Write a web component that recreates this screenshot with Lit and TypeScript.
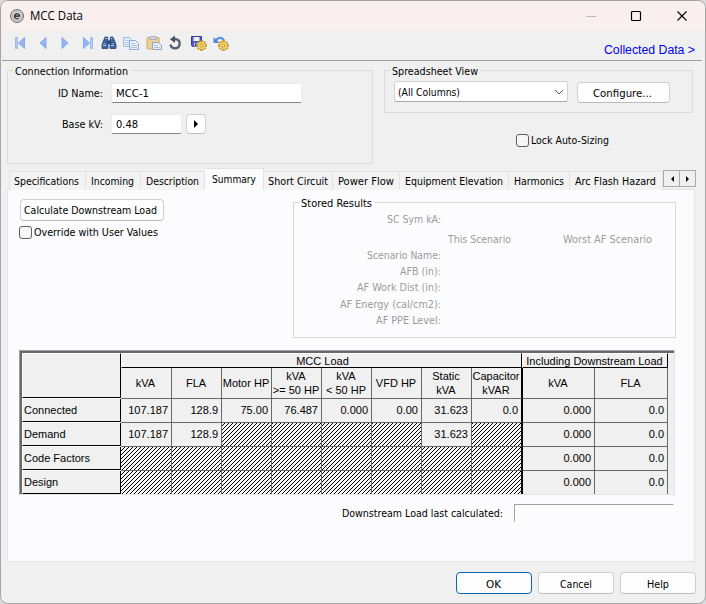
import { LitElement, html, svg, css } from "lit";
import { customElement } from "lit/decorators.js";

const tabs = [
  { label: "Specifications", w: 77, t: 65 }, { label: "Incoming", w: 55, t: 43 },
  { label: "Description", w: 64, t: 53 }, { label: "Summary", w: 59, t: 44, on: true },
  { label: "Short Circuit", w: 69, t: 60 }, { label: "Power Flow", w: 67, t: 56 },
  { label: "Equipment Elevation", w: 109, t: 98 }, { label: "Harmonics", w: 61, t: 50 },
  { label: "Arc Flash Hazard", w: 93, t: 81 },
];

const rows: { name: string; cells: (string | null)[] }[] = [
  { name: "Connected", cells: ["107.187", "128.9", "75.00", "76.487", "0.000", "0.00", "31.623", "0.0", "0.000", "0.0"] },
  { name: "Demand", cells: ["107.187", "128.9", null, null, null, null, "31.623", null, "0.000", "0.0"] },
  { name: "Code Factors", cells: [null, null, null, null, null, null, null, null, "0.000", "0.0"] },
  { name: "Design", cells: [null, null, null, null, null, null, null, null, "0.000", "0.0"] },
];

const heads = [["kVA"], ["FLA"], ["Motor HP"], ["kVA", ">= 50 HP"], ["kVA", "< 50 HP"], ["VFD HP"], ["Static", "kVA"], ["Capacitor", "kVAR"], ["kVA"], ["FLA"]];

const results = [["Scenario Name:", 74], ["AFB (in):", 41], ["AF Work Dist (in):", 84], ["AF Energy (cal/cm2):", 101], ["AF PPE Level:", 65]] as const;

const gear = svg`<g transform="translate(10.5 10.5)"><path d="M-1-5h2v10h-2zM-5-1h10v2h-10z" fill="#e0ae2c" stroke="#a67c16" stroke-width=".6"/><path d="M-1-5h2v10h-2zM-5-1h10v2h-10z" transform="rotate(45)" fill="#e0ae2c" stroke="#a67c16" stroke-width=".6"/><circle r="3.600" fill="#f8d658"/><circle r="1.500" fill="#f0f0f0" stroke="#a67c16" stroke-width=".8"/></g>`;

const icons = [
  { w: 23, g: svg`<path d="M3.500 2.500h2v11h-2z" fill="#b4cdf7" stroke="#8fb0ea" stroke-width=".8"/><path d="M12.500 2.500v11L6.500 8z" fill="#94b6f4" stroke="#7c9fe4" stroke-width=".8"/>` },
  { w: 22, g: svg`<path d="M11 2.500v11L5 8z" fill="#94b6f4" stroke="#7c9fe4" stroke-width=".8"/>` },
  { w: 22, g: svg`<path d="M5 2.500v11L11 8z" fill="#94b6f4" stroke="#7c9fe4" stroke-width=".8"/>` },
  { w: 22, g: svg`<path d="M4.500 2.500v11L10.500 8z" fill="#94b6f4" stroke="#7c9fe4" stroke-width=".8"/><path d="M11.500 2.500h2v11h-2z" fill="#b4cdf7" stroke="#8fb0ea" stroke-width=".8"/>` },
  { w: 22, g: svg`<path d="M4 2h2.500l.5 4v7.500H1V9.500zM12 2H9.500L9 6v7.500h6V9.500z" fill="#3d639c" stroke="#254678" stroke-width=".8"/><path d="M7 5.500h2v3.500H7z" fill="#254678"/><path d="M2 10.500h3M10 10.500h3M4.500 3.500h1.500M10 3.500h1.500" stroke="#c3d7f4"/><path d="M2.500 8.500h2M11 8.500h2" stroke="#88a9d8"/>` },
  { w: 23, g: svg`<path d="M.5 2.500h6l2 2v7h-8z" fill="#e2ebfa" stroke="#9db9e6"/><path d="M2 5.500h4M2 7.500h4M2 9.500h4" stroke="#b5caee"/><path d="M6.500 5.500h6l3 3v6h-9z" fill="#edf3fd" stroke="#8eabde"/><path d="M8 8.500h4M8 10.500h6M8 12.500h6" stroke="#abc3ec"/>` },
  { w: 21, g: svg`<rect x="1" y="2.500" width="12" height="11.500" rx="1" fill="#ecd09c" stroke="#c9a873"/><path d="M4 1.500h6v3H4z" fill="#d8d8dc" stroke="#a4a4ac" stroke-width=".8"/><path d="M6.500 7.500h6l3 3v4h-9z" fill="#e9edf5" stroke="#97a4bd"/><path d="M8 10.500h4M8 12.500h6" stroke="#b4bfd3"/>` },
  { w: 24, g: svg`<path d="M7 4.200H9a4.600 4.600 0 1 1-5.500 5.300" fill="none" stroke="#59626d" stroke-width="2.400"/><path d="M8 .5v7.500L3 4.200z" fill="#48525e"/>` },
  { w: 22, g: svg`<path d="M.5 1.500h10v10h-9l-1-1z" fill="#5459c2" stroke="#373c9b"/><path d="M2.500 2h6v4h-6z" fill="#eef0ff"/><path d="M3 8h5v3.500H3z" fill="#c7caf0"/><path d="M4 8.500h1.500v2.500H4z" fill="#2d328f"/>${gear}` },
  { w: 16, g: svg`<path d="M3 5.500C4.500 2.500 9 1.500 11 5" fill="none" stroke="#5a93e4" stroke-width="2.200"/><path d="M.500 2v6h6z" fill="#4a86dc"/>${gear}` },
];

@customElement("fit-text")
export class FitText extends LitElement {
  static properties = { text: {}, width: { type: Number } };
  declare text: string;
  declare width: number;
  static styles = css`
    :host { display: inline-block; white-space: pre; flex: none; }
    svg { display: block; overflow: visible; height: 14px; }
    text { fill: currentColor; }
  `;
  render() {
    return html`<svg width=${this.width} height="14"><text x="0" y="11" textLength=${this.width} lengthAdjust="spacingAndGlyphs">${this.text}</text></svg>`;
  }
}

const fit = (text: string, width: number) => html`<fit-text .text=${text} .width=${width}></fit-text>`;

@customElement("app-root")
export class AppRoot extends LitElement {
  static styles = css`
    :host { display: block; width: 706px; height: 604px; background: #d9dadc; font: 11px "DejaVu Sans Condensed", "DejaVu Sans", sans-serif; font-stretch: condensed; color: #000; }
    * { box-sizing: border-box; }
    .win { width: 706px; height: 604px; border: 1px solid #a6a6a6; border-radius: 8px; background: #f0f0f0; display: flex; flex-direction: column; overflow: hidden; }
    .title { height: 30px; flex: none; background: #f9efef; display: flex; align-items: center; padding: 0 9px 0 8px; font: 12px "Open Sans", sans-serif; }
    .title fit-text { margin: 0 0 0 5px; }
    .caption { margin-left: auto; width: 110px; height: 14px; }
    .bar { height: 30px; flex: none; border-bottom: 1px solid #9c9c9c; margin-right: 3px; margin-left: 1px; display: flex; padding: 4px 7px 0 10px; }
    .tool svg { display: block; }
    .link { margin: 8px 0 0 auto; color: #0000f0; font: 12.500px "Liberation Sans", sans-serif; }
    .top { height: 108px; flex: none; display: flex; padding: 9px 11px 0 6px; align-items: flex-start; }
    .group { position: relative; border: 1px solid #dcdcdc; }
    .legend { position: absolute; top: -7px; left: 5px; padding: 0 3px 0 2px; background: #f0f0f0; height: 14px; }
    .conn { width: 366px; height: 94px; padding-top: 12px; flex: none; }
    .right { margin-left: 11px; width: 309px; flex: none; }
    .field { display: flex; align-items: center; height: 20px; margin-bottom: 11px; }
    .lab { width: 95px; display: flex; justify-content: flex-end; margin-right: 8px; }
    .input { background: #fff; height: 20px; border: 1px solid #ececec; border-bottom: 1px solid #868686; border-radius: 2px; padding: 2px 4px; }
    .btn { background: #fdfdfd; border: 1px solid #d0d0d0; border-bottom-color: #bcbcbc; border-radius: 4px; display: flex; align-items: center; justify-content: center; height: 22px; flex: none; }
    .mini { width: 20px; height: 20px; margin-left: 4px; }
    .view { height: 43px; display: flex; padding: 10px 0 0 9px; gap: 9px; }
    .select { width: 174px; height: 21px; background: #fff; border: 1px solid #d2d2d2; border-bottom-color: #aaa; border-radius: 2px; display: flex; align-items: center; justify-content: space-between; padding: 0 3px; }
    .cfg { width: 93px; margin-top: 1px; height: 21px; padding-right: 2px; }
    .check { display: flex; align-items: center; gap: 2px; }
    .box { width: 13px; height: 13px; border: 1px solid #5f5f5f; border-radius: 3px; background: #f7f7f7; }
    .lock { margin: 20px 0 0 132px; }
    .tabs { height: 21px; flex: none; display: flex; align-items: flex-end; padding-left: 8px; position: relative; margin-bottom: -1px; }
    .tab { height: 19px; border: 1px solid #e3e3e3; border-left-width: 0; border-bottom: 0; background: #f3f3f3; display: flex; align-items: center; justify-content: center; padding-right: 1px; }
    .tab:first-child { border-left-width: 1px; padding-right: 2px; }
    .tab.on { height: 22px; background: #fbfbfb; padding: 0 1px 2px 0; }
    .spin { width: 17px; height: 17px; border: 1px solid #ababab; background: #f0f0f0; display: flex; align-items: center; justify-content: center; margin-bottom: 3px; }
    .spin + .spin { margin-left: -1px; }
    .panel { width: 688px; height: 373px; flex: none; margin-left: 6px; background: #fcfcfe; border: 1px solid #e3e3e3; padding: 9px 0 0 11px; }
    .upper { display: flex; height: 151px; }
    .left { width: 274px; display: flex; flex-direction: column; }
    .calc { width: 144px; margin: 0 0 4px 1px; padding-right: 3px; }
    .stored { width: 383px; height: 136px; margin-top: 3px; border-color: #d8d8d8; color: #9b9b9b; padding-top: 9px; }
    .stored .legend { background: #fcfcfe; color: #000; }
    .r { width: 147px; height: 16.250px; display: flex; justify-content: flex-end; }
    .scen { display: flex; height: 19.500px; padding: 4px 0 0 154px; gap: 52px; }
    .sheet { width: 656px; height: 145px; border: solid; border-width: 1px; border-color: #a0a0a0 #e3e3e3 #e3e3e3 #a0a0a0; background: #f0f0f0; font: 11px "Liberation Sans", Arial, sans-serif; }
    .inner { border: 2px solid #696969; border-width: 2px 0 0 2px; height: 143px; }
    .grid { display: grid; grid-template-columns: 99px 51px repeat(6, 50px) 51px 72px 73px; grid-template-rows: 15px 31px repeat(4, 24px); height: 141px; overflow: hidden; width: 646px; }
    .rh { border-right: 1px solid #000; border-bottom: 1px solid #000; border-left: 1px solid #fff; margin-bottom: 1px; box-shadow: 0 1px #fff; display: flex; align-items: center; padding: 0 0 0 1px; }
    .corner { grid-row: 1 / 3; border-top: 1px solid #fff; }
    .top1 { border: 1px solid #000; border-top-color: #fff; border-left-color: #fff; display: flex; align-items: center; justify-content: center; }
    .mcc { grid-column: 2 / 10; margin-right: 1px; padding-left: 2px; }
    .inc { grid-column: 10 / 12; margin-left: -1px; padding-right: 1px; }
    .h, .c { border-right: 1px solid #696969; border-bottom: 1px solid #696969; }
    .h { display: flex; flex-direction: column; align-items: center; justify-content: center; line-height: 14px; white-space: nowrap; padding-right: 1px; }
    .c { display: flex; align-items: center; justify-content: flex-end; padding: 0 3px 1px 0; }
    .hatch { background: #f4f4f4 url("data:image/svg+xml,%3Csvg xmlns='http://www.w3.org/2000/svg' width='4' height='4' shape-rendering='crispEdges'%3E%3Cpath d='M3 0h1v1h-1zM2 1h1v1h-1zM1 2h1v1h-1zM0 3h1v1h-1z'/%3E%3C/svg%3E") fixed; }
    .h.edge, .c.edge { border-right: 2px solid #000; }
    .last { display: flex; align-items: center; justify-content: flex-end; gap: 11px; margin: 9px 20px 0 0; }
    .out { width: 160px; height: 18px; border: 1px solid #a0a0a0; border-right-color: #fff; border-bottom-color: #fff; }
    .foot { display: flex; justify-content: flex-end; gap: 6px; padding: 10px 9px 0 0; }
    .foot .btn { width: 76px; padding: 1px 1px 0 0; }
    .foot .ok { border-color: #0067c0; }
  `;

  render() {
    return html`<div class="win">
      <div class="title">
        <svg width="16" height="16"><circle cx="8" cy="8" r="6.500" fill="#dedede" stroke="#686868"/><circle cx="8" cy="8" r="4.900" fill="#d0d0d0" stroke="#9a9a9a" stroke-width=".6"/><path d="M5.500 8.200h5a2.500 2.500 0 1 0-.8 1.900" fill="none" stroke="#222" stroke-width="1.200"/></svg>
        ${fit("MCC Data", 53)}
        <svg class="caption" viewBox="0 0 110 14"><path d="M0 7.500h10" stroke="#b8b8b8"/><rect x="45.500" y="2.500" width="9" height="9" rx="1" fill="none" stroke="#000" stroke-width="1.200"/><path d="M91.500 2.500l9 9M100.500 2.500l-9 9" stroke="#000" stroke-width="1.100"/></svg>
      </div>
      <div class="bar">
        ${icons.map((i) => html`<div class="tool" style="width:${i.w}px"><svg width="16" height="16">${i.g}</svg></div>`)}
        <div class="link">${fit("Collected Data >", 91)}</div>
      </div>
      <div class="top">
        <div class="group conn"><div class="legend">${fit("Connection Information", 113)}</div>
          <div class="field"><div class="lab">${fit("ID Name:", 45)}</div><div class="input" style="width:191px">${fit("MCC-1", 33)}</div></div>
          <div class="field"><div class="lab">${fit("Base kV:", 41)}</div><div class="input" style="width:71px">${fit("0.48", 22)}</div>
            <div class="btn mini"><svg width="6" height="8"><path d="M1 0l4 4-4 4z"/></svg></div></div>
        </div>
        <div class="right">
          <div class="group view"><div class="legend">${fit("Spreadsheet View", 86)}</div>
            <div class="select">${fit("(All Columns)", 62)}<svg width="10" height="6"><path d="M1 1l4 4 4-4" fill="none" stroke="#555"/></svg></div>
            <div class="btn cfg">${fit("Configure...", 59)}</div>
          </div>
          <div class="check lock"><div class="box"></div>${fit("Lock Auto-Sizing", 78)}</div>
        </div>
      </div>
      <div class="tabs">
        ${tabs.map((t) => html`<div class="tab ${t.on ? "on" : ""}" style="width:${t.w}px">${fit(t.label, t.t)}</div>`)}
        <div class="spin"><svg width="4" height="6"><path d="M4 0v6L1 3z"/></svg></div>
        <div class="spin"><svg width="4" height="6"><path d="M0 0v6l3-3z"/></svg></div>
      </div>
      <div class="panel">
        <div class="upper">
          <div class="left"><div class="btn calc">${fit("Calculate Downstream Load", 133)}</div>
            <div class="check"><div class="box"></div>${fit("Override with User Values", 124)}</div></div>
          <div class="group stored"><div class="legend">${fit("Stored Results", 71)}</div>
            <div class="r">${fit("SC Sym kA:", 54)}</div>
            <div class="scen">${fit("This Scenario", 63)}${fit("Worst AF Scenario", 89)}</div>
            ${results.map(([t, w]) => html`<div class="r">${fit(t, w)}</div>`)}
          </div>
        </div>
        <div class="sheet"><div class="inner"><div class="grid">
          <div class="rh corner"></div><div class="top1 mcc">MCC Load</div><div class="top1 inc">Including Downstream Load</div>
          ${heads.map((h, i) => html`<div class="h ${i === 7 ? "edge" : ""}">${h.map((l) => html`<span>${l}</span>`)}</div>`)}
          ${rows.map((r) => html`<div class="rh">${r.name}</div>${r.cells.map((c, i) => html`<div class="c ${c === null ? "hatch" : ""} ${i === 7 ? "edge" : ""}">${c ?? ""}</div>`)}`)}
        </div></div></div>
        <div class="last">${fit("Downstream Load last calculated:", 161)}<div class="out"></div></div>
      </div>
      <div class="foot"><div class="btn ok">${fit("OK", 15)}</div><div class="btn">${fit("Cancel", 32)}</div><div class="btn">${fit("Help", 22)}</div></div>
    </div>`;
  }
}
